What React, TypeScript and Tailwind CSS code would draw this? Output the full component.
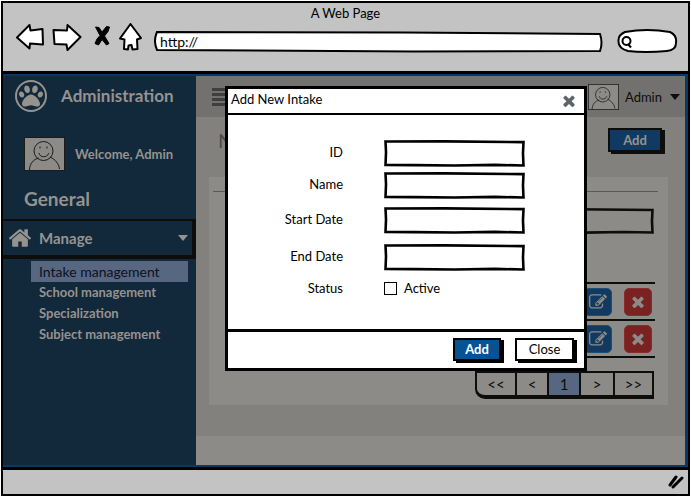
import React from "react";
import { FaPaw } from "react-icons/fa";

type IconProps = { className?: string };

const INK = "#0d0d0b";

function TimesIcon({ className }: IconProps) {
  return (
    <svg viewBox="302 302 1188 1252" fill="currentColor" className={className} aria-hidden="true">
      <path d="M1490 1322q0 40-28 68l-136 136q-28 28-68 28t-68-28l-294-294-294 294q-28 28-68 28t-68-28l-136-136q-28-28-28-68t28-68l294-294-294-294q-28-28-28-68t28-68l136-136q28-28 68-28t68 28l294 294 294-294q28-28 68-28t68 28l136 136q28 28 28 68t-28 68l-294 294 294 294q28 28 28 68z" />
    </svg>
  );
}

function EditIcon({ className }: IconProps) {
  return (
    <svg viewBox="0 0 1792 1792" fill="currentColor" className={className} aria-hidden="true">
      <path d="M888 1184l116-116-152-152-116 116v56h96v96h56zm440-720q-16-16-33 1l-350 350q-17 17-1 33t33-1l350-350q17-17 1-33zm80 594v190q0 119-84.500 203.500t-203.500 84.500h-832q-119 0-203.500-84.500t-84.500-203.500v-832q0-119 84.500-203.500t203.500-84.500h832q63 0 117 25 15 7 18 23 3 17-9 29l-49 49q-14 14-32 8-23-6-45-6h-832q-66 0-113 47t-47 113v832q0 66 47 113t113 47h832q66 0 113-47t47-113v-126q0-13 9-22l64-64q15-15 35-7t20 29zm-96-738l288 288-672 672h-288v-288zm444 132l-92 92-288-288 92-92q28-28 68-28t68 28l152 152q28 28 28 68t-28 68z" />
    </svg>
  );
}

function HomeIcon({ className }: IconProps) {
  return (
    <svg viewBox="90 250 1612 1290" fill="currentColor" className={className} aria-hidden="true">
      <path d="M1472 992v480q0 26-19 45t-45 19h-384v-384h-256v384h-384q-26 0-45-19t-19-45v-480q0-1 .5-3t.5-3l575-474 575 474q1 2 1 6zm223-69l-62 74q-8 9-21 11h-3q-13 0-21-7l-692-577-692 577q-12 8-24 7-13-2-21-11l-62-74q-8-10-7-23.500t11-21.500l719-599q32-26 76-26t76 26l244 204v-195q0-14 9-23t23-9h192q14 0 23 9t9 23v408l219 182q10 8 11 21.500t-7 23.500z" />
    </svg>
  );
}

function Avatar({ className }: IconProps) {
  return (
    <svg viewBox="0 0 41 34" preserveAspectRatio="none" className={className} role="img" aria-label="User avatar">
      <rect x="0.5" y="0.5" width="40" height="33" fill="#8d8b88" stroke="#1c1b1a" />
      <g fill="none" stroke="#1c1b1a" strokeWidth="1">
        <ellipse cx="19.500" cy="14" rx="9.500" ry="9.500" />
        <path d="M5.500 33c0-6 4-11 9.500-12M26 20c5 2 9 7 9.500 12M15 16c1 5 8 5 10 0M16 9.500v2M23 9.500v2" />
      </g>
    </svg>
  );
}

/* Hand-drawn outline which stretches to the size of its parent. */
function Sketch({ stroke = "#000", fill = "#fff" }: { stroke?: string; fill?: string }) {
  return (
    <svg viewBox="0 0 140 26" preserveAspectRatio="none" className="absolute inset-0 h-full w-full" aria-hidden="true">
      <path d="M1.500 1.500L60 1.300L138.500 2L138 13L138.500 24.500L110 24L70 24.600L30 24.200L1.500 24L2 12Z" fill={fill} stroke={stroke} strokeWidth="2.600" vectorEffect="non-scaling-stroke" />
    </svg>
  );
}

function Caret({ className }: IconProps) {
  return (
    <svg viewBox="0 0 10 6" className={className} fill="currentColor" aria-hidden="true">
      <path d="M0 0h10L5 6z" />
    </svg>
  );
}

function BrowserBar() {
  return (
    <header className="border-b-[3px] border-black bg-[#c3c3c3]">
      <h1 className="text-center text-[13px] leading-5">A Web Page</h1>
      <div className="flex h-12 items-start pl-[13px] pr-[10px]">
        <button aria-label="Back" className="mr-2">
          <svg width="28" height="28" viewBox="0 0 28 28" fill="#fff" stroke="#000" strokeWidth="2" strokeLinejoin="round">
            <path d="M1 14.500L13.500 2L14.500 7.500L26.500 6L27 21.500L14 20.500L13.500 25.500Z" />
          </svg>
        </button>
        <button aria-label="Forward" className="mr-3">
          <svg width="30" height="28" viewBox="0 0 30 28" fill="#fff" stroke="#000" strokeWidth="2" strokeLinejoin="round">
            <path d="M1.500 7L15 7.500L15.500 2L28.500 14L15.500 27L14.500 21.500L2.500 21Z" />
          </svg>
        </button>
        <button aria-label="Stop" className="mr-2">
          <svg width="17" height="28" viewBox="0 0 17 28" fill="#000" stroke="#000" strokeLinejoin="round">
            <path d="M1.500 4L5 4.500L8 9L12.500 3.500L15.500 4L14 8.500L10.500 13L15 20.500L12.500 22L8 16.500L4.500 22L1 20.500L3 16L6 12.500Z" />
          </svg>
        </button>
        <button aria-label="Home">
          <svg width="23" height="28" viewBox="0 0 23 28" fill="#fff" stroke="#000" strokeWidth="2" strokeLinejoin="round">
            <path d="M11.500 1L22 15L18 16.500L18.500 26L13.500 26.500L12.500 22L9.500 22.500L9 26.500L5 26L5.500 16.500L1 15.500Z" />
          </svg>
        </button>
        <div className="relative ml-3 mt-2 h-[22px] min-w-0 flex-1">
          <svg viewBox="0 0 450 22" preserveAspectRatio="none" className="absolute inset-0 h-full w-full" aria-hidden="true">
            <path d="M3 1L250 1.500L447 3Q450 12 447 20L260 20.500L3 19Q-1 10 3 1Z" fill="#fff" stroke="#000" strokeWidth="2" vectorEffect="non-scaling-stroke" />
          </svg>
          <input aria-label="Address" defaultValue="http://" className="relative block h-5 w-full bg-transparent px-[6px] text-[14px] outline-none" />
        </div>
        <div className="relative ml-[14px] mt-[6px] h-6 w-[61px]">
          <svg viewBox="0 0 61 24" className="absolute inset-0 h-full w-full" fill="#fff" stroke="#000" strokeWidth="2" aria-hidden="true">
            <path d="M8 3Q30-1 53 3Q60 6 59 14Q59 21 50 22Q28 24 11 22Q1 19 1.500 12Q1 6 8 3Z" />
            <circle cx="9.500" cy="12" r="4" />
            <path d="M11 15L14 18.500" />
          </svg>
          <input aria-label="Search the web" className="relative block h-full w-full bg-transparent pl-5 pr-2 text-[13px] outline-none" />
        </div>
      </div>
    </header>
  );
}

const MENU = ["Intake management", "School management", "Specialization", "Subject management"];

function Sidebar() {
  return (
    <aside className="w-[193px] shrink-0 bg-[#12283b] text-[#96938f]">
      <div className="flex items-center gap-[14px] pl-3 pt-1">
        <span className="flex size-8 items-center justify-center rounded-full border-2 border-current">
          <FaPaw className="size-6" />
        </span>
        <span className="text-[17px] font-bold leading-6">Administration</span>
      </div>
      <div className="mt-[25px] flex items-center pl-[21px]">
        <Avatar className="h-[34px] w-[41px]" />
        <span className="pl-[10px] text-[13px] font-bold leading-5">Welcome, Admin</span>
      </div>
      <h2 className="mt-4 pl-[21px] text-[19px] font-bold leading-6">General</h2>
      <button className="mt-2 flex h-10 w-full items-center border-b-4 border-r-4 border-t-2 pl-[6px] pr-1 text-left" style={{ borderColor: INK }}>
        <HomeIcon className="h-[18px] w-[22px]" />
        <span className="flex-1 pl-2 text-[15px] font-bold">Manage</span>
        <Caret className="h-[6px] w-[10px]" />
      </button>
      <nav className="ml-7 mr-2 mt-[2px]">
        {MENU.map((item, i) => (
          <a
            key={item}
            href="#"
            className={
              i === 0
                ? "block bg-[#586781] pl-2 text-[14px] leading-[21px] text-[#0c111b]"
                : "block pl-2 text-[13px] font-bold leading-[21px]"
            }
          >
            {item}
          </a>
        ))}
      </nav>
    </aside>
  );
}

function RowActions() {
  return (
    <li className="flex h-[37px] items-center justify-end border-b-2 border-[#0d0d0b] pr-[3px]">
      <button aria-label="Edit" className="flex size-7 items-center justify-center rounded-[5px] border border-[#1c4e78] bg-[#123a60] text-[#8d8b88]">
        <EditIcon className="size-[18px]" />
      </button>
      <button aria-label="Delete" className="ml-3 flex size-7 items-center justify-center rounded-[5px] border border-[#8b2c2c] bg-[#7a2222] text-[#8d8b88]">
        <TimesIcon className="size-3" />
      </button>
    </li>
  );
}

const cell = "h-full border-r-2 border-[#0d0d0b] text-[15px] leading-5";

function Content() {
  return (
    <main className="flex min-w-0 flex-1 flex-col bg-[#82817d] text-[#0d0d0b]">
      <div className="flex h-[41px] items-center bg-[#72716f] pl-4 pr-[5px]">
        <button aria-label="Toggle menu" className="flex w-[22px] flex-col gap-[2px]">
          <span className="h-[3px] bg-[#403f3e]" />
          <span className="h-[3px] bg-[#403f3e]" />
          <span className="h-[3px] bg-[#403f3e]" />
          <span className="h-[3px] bg-[#403f3e]" />
        </button>
        <button className="ml-auto flex items-center">
          <Avatar className="h-[26px] w-[31px]" />
          <span className="pl-[6px] pr-2 text-[13px] leading-5">Admin</span>
          <Caret className="h-[6px] w-[10px]" />
        </button>
      </div>
      <div className="flex h-[60px] items-start justify-between pl-[22px] pr-[23px] pt-[11px]">
        <h2 className="text-[20px] leading-6 text-[#4b4b4d]">N</h2>
        <button className="h-6 w-[54px] border-2 border-[#0d0d0b] bg-[#113a62] text-[13px] font-bold leading-5 text-[#96938f] shadow-[3px_2px_0_#0d0d0b]">Add</button>
      </div>
      <section className="mx-[13px] mr-[17px] h-[228px] bg-[#8c8b88] pl-1 pr-[10px] pt-[14px]">
        <hr className="border-[#5a5957]" />
        <div className="relative ml-auto mr-1 mt-4 h-[26px] w-[140px]">
          <Sketch stroke={INK} fill="#8c8b88" />
          <input aria-label="Search intakes" className="relative block h-full w-full bg-transparent px-2 text-[13px] outline-none" />
        </div>
        <ul className="ml-12 mr-[3px] mt-12 border-t-2 border-[#0d0d0b]">
          <RowActions />
          <RowActions />
        </ul>
        <div className="ml-auto mr-1 mt-[13px] flex h-7 w-[179px] rounded-bl-[10px] border-b-4 border-l-2 border-r-2 border-t-2 border-[#0d0d0b]">
          <button className={cell + " w-10"}>&lt;&lt;</button>
          <button className={cell + " w-8"}>&lt;</button>
          <button className={cell + " w-8 bg-[#586781]"}>1</button>
          <button className={cell + " w-[34px]"}>&gt;</button>
          <button className="h-full flex-1 text-[15px] leading-5">&gt;&gt;</button>
        </div>
      </section>
      <div className="flex-1" />
      <div className="h-[29px] bg-[#8c8b88]" />
    </main>
  );
}

const FIELDS = [
  { id: "intake-id", label: "ID", space: "" },
  { id: "intake-name", label: "Name", space: "mt-[5px]" },
  { id: "intake-start", label: "Start Date", space: "mt-2" },
  { id: "intake-end", label: "End Date", space: "mt-[10px]" },
];

function IntakeDialog() {
  return (
    <form
      role="dialog"
      aria-labelledby="intake-title"
      className="absolute left-[222px] top-[10px] w-[362px] border-[3px] border-black bg-white text-[13px] text-black"
      onSubmit={(e: React.FormEvent) => e.preventDefault()}
    >
      <div className="flex h-[26px] items-center justify-between border-b-2 border-black pb-1 pl-[3px] pr-[9px]">
        <h2 id="intake-title" className="leading-5">Add New Intake</h2>
        <button type="button" aria-label="Close dialog" className="pt-1 text-[#5f6469]">
          <TimesIcon className="size-3" />
        </button>
      </div>
      <div className="pb-[27px] pt-[25px]">
        {FIELDS.map((f) => (
          <div key={f.id} className={"flex h-[27px] " + f.space}>
            <label htmlFor={f.id} className="w-[115px] text-right leading-6">{f.label}</label>
            <div className="relative ml-[41px] w-[141px]">
              <Sketch />
              <input id={f.id} className="relative block h-full w-full bg-transparent px-2 outline-none" />
            </div>
          </div>
        ))}
        <div className="mt-1 flex h-[27px] items-center">
          <span className="w-[115px] text-right">Status</span>
          <input id="intake-active" type="checkbox" className="ml-[41px] size-[13px] appearance-none border border-black bg-white checked:bg-black" />
          <label htmlFor="intake-active" className="pl-[7px]">Active</label>
        </div>
      </div>
      <div className="flex h-[39px] items-start justify-end gap-[14px] border-t-[3px] border-black pr-[10px] pt-[6px]">
        <button type="submit" className="h-[23px] w-[48px] border-2 border-black bg-[#075293] font-bold leading-[19px] text-white shadow-[3px_2px_0_#000]">Add</button>
        <button type="button" className="h-[23px] w-[59px] border-2 border-black bg-white leading-[19px] shadow-[3px_2px_0_#000]">Close</button>
      </div>
    </form>
  );
}

export default function App() {
  return (
    <div className="flex min-h-screen bg-white p-px font-['Lato','Open_Sans',sans-serif] text-black">
      <div className="flex min-w-0 flex-1 flex-col border-2 border-black">
        <BrowserBar />
        <div className="relative flex flex-1 border-b-2 border-r-[3px] border-t-2 border-[#0a3763]">
          <Sidebar />
          <Content />
          <IntakeDialog />
        </div>
        <footer className="flex h-[27px] items-center justify-end border-t-[3px] border-black bg-[#c3c3c3] pr-1">
          <svg width="16" height="14" viewBox="0 0 16 14" fill="none" stroke="#000" strokeWidth="3" strokeLinecap="round" aria-hidden="true">
            <path d="M2 10L8 2M5 12L14 3" />
          </svg>
        </footer>
      </div>
    </div>
  );
}
